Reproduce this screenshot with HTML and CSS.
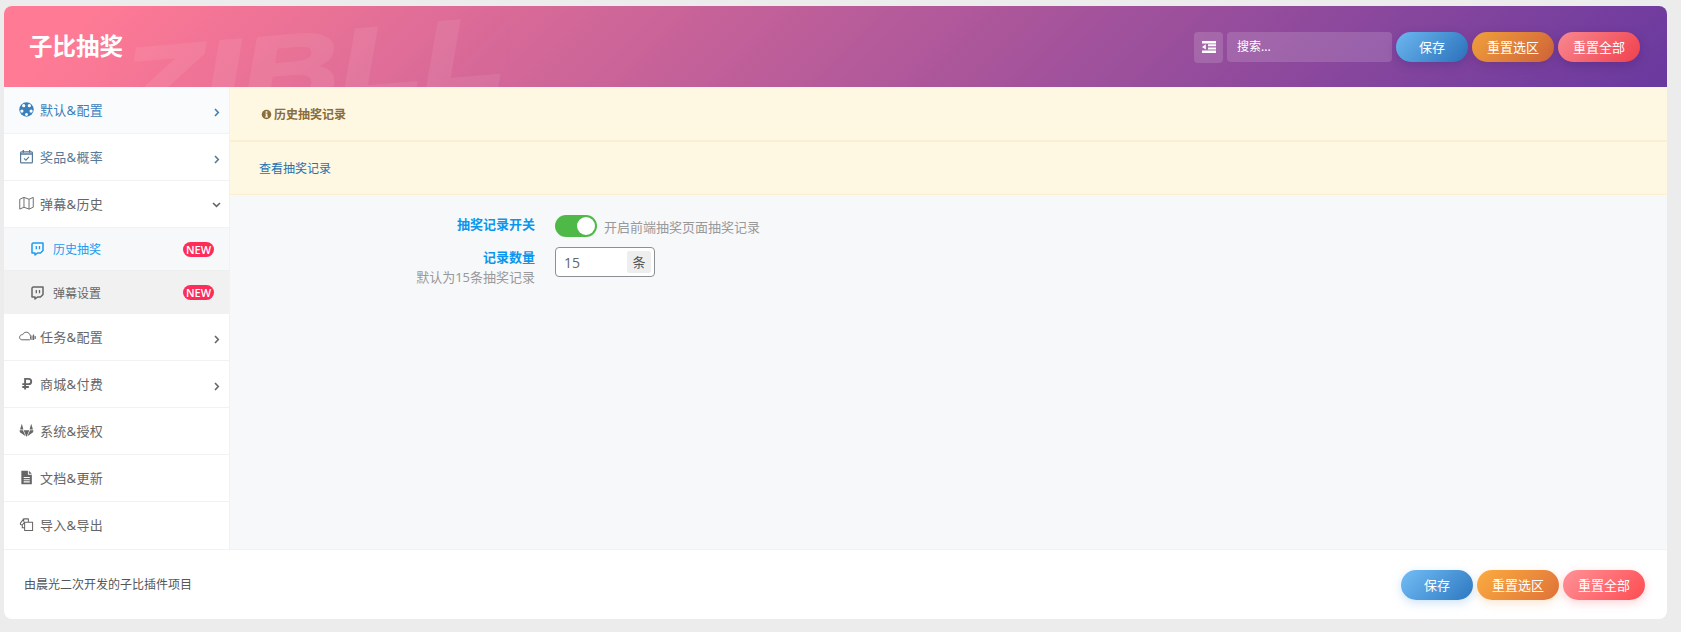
FILE: index.html
```html
<!DOCTYPE html>
<html lang="zh-CN">
<head>
<meta charset="utf-8">
<title>子比抽奖</title>
<link rel="stylesheet" href="styles.css">
</head>
<body>
<div class="card">
  <header class="top">
    <span class="watermark">ZIBLL</span>
    <h1 class="title">子比抽奖</h1>
    <div class="top-tools">
      <span class="expand">
        <svg width="14" height="12" viewBox="0 0 14 12"><path fill="#fff" d="M0 0h14v2.400H0zM6 3.300h8v2H6zM6 6.400h8v2H6zM0 9.600h14V12H0zM3.800 3.200v5.400L0 6z"/></svg>
      </span>
      <input class="search" type="text" placeholder="搜索...">
      <button class="btn btn-save">保存</button>
      <button class="btn btn-section">重置选区</button>
      <button class="btn btn-all">重置全部</button>
    </div>
  </header>
  <div class="main">
    <nav class="side">
      <a class="item item-active">
        <svg class="ico" viewBox="0 0 16 16"><circle cx="8" cy="8" r="7.700" fill="currentColor"/><g fill="#fff"><circle cx="11" cy="3.900" r="1.700"/><circle cx="5" cy="3.900" r="1.700"/><circle cx="12.900" cy="9.700" r="1.700"/><circle cx="3.100" cy="9.700" r="1.700"/><circle cx="8" cy="13.300" r="1.500"/></g></svg>
        <span class="label">默认&amp;配置</span>
        <svg class="chev" viewBox="0 0 6 9"><path d="M1 1l3.300 3.500L1 8" fill="none" stroke="currentColor" stroke-width="1.600"/></svg>
      </a>
      <a class="item item-slate">
        <svg class="ico" viewBox="0 0 16 16"><rect x="1.700" y="3" width="12.600" height="11.800" rx="1" fill="none" stroke="currentColor" stroke-width="1.300"/><path d="M1.700 5.400h12.600" stroke="currentColor" stroke-width="1.500"/><path d="M4.600 1v3M11.400 1v3" stroke="currentColor" stroke-width="1.500"/><path d="M5.300 10l2 1.900 3.400-3.500" fill="none" stroke="currentColor" stroke-width="1.100"/></svg>
        <span class="label">奖品&amp;概率</span>
        <svg class="chev" viewBox="0 0 6 9"><path d="M1 1l3.300 3.500L1 8" fill="none" stroke="currentColor" stroke-width="1.600"/></svg>
      </a>
      <a class="item">
        <svg class="ico ico-wide" viewBox="0 0 16 14"><path d="M.8 3L5.300 1l5.400 2 4.500-2v10.500l-4.500 2-5.400-2-4.500 2zM5.300 1v10.500M10.700 3v10.500" fill="none" stroke="currentColor" stroke-width="1"/></svg>
        <span class="label">弹幕&amp;历史</span>
        <svg class="chev chev-down" viewBox="0 0 9 6"><path d="M1 1l3.500 3.300L8 1" fill="none" stroke="currentColor" stroke-width="1.600"/></svg>
      </a>
      <a class="sub sub-active">
        <svg class="twitch" viewBox="0 0 13 14"><path d="M2 1h10v7.500L9.500 11H6.500L4 13v-2H1V2z" fill="none" stroke="currentColor" stroke-width="1.500" stroke-linejoin="round"/><path d="M5.300 4v3.200M8.500 4v3.200" stroke="currentColor" stroke-width="1.300"/></svg>
        <span class="label">历史抽奖</span>
        <span class="badge">NEW</span>
      </a>
      <a class="sub sub-plain">
        <svg class="twitch" viewBox="0 0 13 14"><path d="M2 1h10v7.500L9.500 11H6.500L4 13v-2H1V2z" fill="none" stroke="currentColor" stroke-width="1.500" stroke-linejoin="round"/><path d="M5.300 4v3.200M8.500 4v3.200" stroke="currentColor" stroke-width="1.300"/></svg>
        <span class="label">弹幕设置</span>
        <span class="badge">NEW</span>
      </a>
      <a class="item">
        <svg class="ico ico-cloud" viewBox="0 0 17 10"><path d="M2.800 8.800H10.500c.6 0 1-.4 1-1V5.500C11.300 3 9.500 1.200 7.300 1.200c-1.600 0-3 1-3.600 2.400C2 3.500.6 4.700.6 6.300c0 1.400 1 2.500 2.200 2.500z" fill="none" stroke="currentColor" stroke-width="1"/><path d="M13 4.500v4.500M14.600 3.500v5.500M16.200 5v3" stroke="currentColor" stroke-width="1.100"/></svg>
        <span class="label">任务&amp;配置</span>
        <svg class="chev" viewBox="0 0 6 9"><path d="M1 1l3.300 3.500L1 8" fill="none" stroke="currentColor" stroke-width="1.600"/></svg>
      </a>
      <a class="item">
        <svg class="ico" viewBox="0 0 16 16"><path d="M6.500 14.500V3h3.700a2.800 2.800 0 010 5.700H3.500M3.500 11.700h7" fill="none" stroke="currentColor" stroke-width="2"/></svg>
        <span class="label">商城&amp;付费</span>
        <svg class="chev" viewBox="0 0 6 9"><path d="M1 1l3.300 3.500L1 8" fill="none" stroke="currentColor" stroke-width="1.600"/></svg>
      </a>
      <a class="item">
        <svg class="ico" viewBox="0 0 16 16"><path fill="currentColor" d="M3 .8L4.700 7H1.100zM13 .8L14.900 7h-3.600zM8 15L5 7.600h6zM4.200 7.800L7 14.200 1 9.900.6 7.800zM11.800 7.800L9 14.200l6-4.300.4-2.100z"/></svg>
        <span class="label">系统&amp;授权</span>
      </a>
      <a class="item">
        <svg class="ico" viewBox="0 0 16 16"><path fill="currentColor" fill-rule="evenodd" d="M2.500.8H9.500V5h4.200v10.200H2.500zM5 7.500v1.100h6.500V7.500zM5 9.800v1.100h6.500V9.800zM5 12.100v1.100h6.500v-1.100zM10.500.8l3.200 3.200h-3.200z"/></svg>
        <span class="label">文档&amp;更新</span>
      </a>
      <a class="item item-last">
        <svg class="ico" viewBox="0 0 16 16"><path d="M6 5.500h8.500v9H6zM6 5.500L3.500 8.500v3H6M3.500 8.500L1.500 8V6.500L5 2h5v3.500M5 2v3" fill="none" stroke="currentColor" stroke-width="1.100" stroke-linejoin="round"/></svg>
        <span class="label">导入&amp;导出</span>
      </a>
    </nav>
    <section class="content">
      <div class="notice notice-head">
        <svg class="info" viewBox="0 0 12 12"><circle cx="6" cy="6" r="5.200" fill="currentColor"/><path d="M5 2.500h2v1.600H5zM4.800 5H7v3.200h.7v1.100H4.500V8.200h.7V6.100h-.4z" fill="#fef7e2"/></svg>
        <span>历史抽奖记录</span>
      </div>
      <div class="notice notice-link"><a class="view-link">查看抽奖记录</a></div>
      <div class="form">
        <div class="row row-switch">
          <div class="field-title"><b>抽奖记录开关</b></div>
          <div class="field-body">
            <span class="switch"><span class="knob"></span></span>
            <span class="hint">开启前端抽奖页面抽奖记录</span>
          </div>
        </div>
        <div class="row row-number">
          <div class="field-title"><b>记录数量</b><small>默认为15条抽奖记录</small></div>
          <div class="field-body">
            <span class="num-box"><input class="num" type="text" value="15"><span class="unit">条</span></span>
          </div>
        </div>
      </div>
    </section>
  </div>
  <footer class="foot">
    <span class="foot-text">由晨光二次开发的子比插件项目</span>
    <div class="foot-tools">
      <button class="btn btn-save light">保存</button>
      <button class="btn btn-section light">重置选区</button>
      <button class="btn btn-all light">重置全部</button>
    </div>
  </footer>
</div>
</body>
</html>
```

FILE: styles.css
```css
* { box-sizing: border-box; }
html, body { height: 100%; }
body {
  margin: 0;
  padding: 6px 14px 13px 4px;
  background: #ececec;
  font-family: "Noto Sans", "Noto Sans CJK SC", "Liberation Sans", sans-serif;
  font-size: 13px;
  color: #666;
  overflow: hidden;
}
.card {
  height: 613px;
  display: flex;
  flex-direction: column;
  background: #fff;
  border-radius: 8px;
  overflow: hidden;
}
.top {
  position: relative;
  flex: 0 0 81px;
  display: flex;
  align-items: center;
  justify-content: space-between;
  padding: 0 27px 0 25px;
  overflow: hidden;
  background: linear-gradient(135deg, #ff7b95 5%, #69399f 100%);
}
.watermark {
  position: absolute;
  left: 121px;
  top: 28px;
  font: italic 700 100px/1 "Liberation Sans", sans-serif;
  color: #fff;
  opacity: 0.07;
  -webkit-text-stroke: 2.5px #fff;
  transform: rotate(-5deg) scaleX(1.36);
  transform-origin: left bottom;
  white-space: nowrap;
}
.title {
  position: relative;
  margin: 0 0 2px;
  font-size: 23.5px;
  line-height: 32px;
  font-weight: 700;
  color: #fff;
}
.top-tools {
  position: relative;
  display: flex;
  align-items: flex-start;
  gap: 4px;
  margin-top: 1px;
}
.expand {
  width: 29px;
  height: 31px;
  display: flex;
  align-items: center;
  justify-content: center;
  border-radius: 4px;
  background: rgba(255, 255, 255, 0.15);
}
.search {
  width: 165px;
  height: 30px;
  padding: 0 10px;
  border: 0;
  border-radius: 4px;
  outline: 0;
  background: rgba(255, 255, 255, 0.15);
  color: #fff;
  font: 12px "Noto Sans", "Noto Sans CJK SC", sans-serif;
}
.search::placeholder { color: #fff; opacity: 1; }
.btn {
  height: 30px;
  width: 82px;
  padding: 0;
  border: 0;
  border-radius: 15px;
  color: #fff;
  font: 13px "Noto Sans", "Noto Sans CJK SC", sans-serif;
}
.btn-save {
  width: 72px;
  background: linear-gradient(135deg, #6cb8f0, #2a70ba);
  box-shadow: 0 3px 10px rgba(50, 40, 120, 0.3);
}
.btn-section {
  background: linear-gradient(135deg, #f0a03c, #cf6238);
  box-shadow: 0 3px 10px rgba(90, 40, 90, 0.3);
}
.btn-all {
  background: linear-gradient(135deg, #f88890, #f0404c);
  box-shadow: 0 3px 10px rgba(70, 30, 110, 0.35);
}
.main {
  flex: 1;
  display: flex;
  min-height: 0;
}
.side {
  flex: 0 0 225px;
  display: flex;
  flex-direction: column;
  background: #fff;
}
.item {
  height: 47px;
  flex: none;
  display: flex;
  align-items: center;
  padding: 0 9px 2px 15px;
  border-bottom: 1px solid #f2f2f2;
  color: #666;
}
.item-last { flex: 1; border-bottom: 0; }
.item-active { background: #f9fbfd; color: #3a80bc; }
.item-slate { color: #577a98; }
.label { white-space: nowrap; }
.item .label { margin-left: 6px; letter-spacing: 0.3px; }
.ico { width: 15px; height: 15px; flex: none; }
.ico-wide { width: 15px; height: 14px; }
.ico-cloud { width: 17px; height: 10px; margin-right: -2px; }
.chev { width: 6px; height: 9px; margin: 6px 0 0 auto; flex: none; }
.chev-down { width: 9px; height: 6px; margin-right: -1px; margin-top: 4px; }
.sub {
  height: 43px;
  flex: none;
  display: flex;
  align-items: center;
  padding: 0 15px 0 27px;
  border-bottom: 1px solid #eee;
  font-size: 12px;
}
.sub .label { margin-left: 9px; }
.sub-active { background: #f7f8fa; color: #1c9bf0; }
.sub-plain { background: #f1f1f1; color: #666; border-bottom: 0; }
.twitch { width: 13px; height: 14px; flex: none; }
.badge {
  margin-left: auto;
  width: 31px;
  height: 15px;
  border-radius: 8px;
  background: #fc2d5a;
  color: #fff;
  font: 600 11px/15px "Open Sans", sans-serif;
  text-align: center;
}
.content {
  flex: 1;
  min-width: 0;
  background: #f7f8fa;
  border-left: 1px solid #f2f2f2;
}
.notice {
  display: flex;
  align-items: center;
  background: #fef7e2;
  border-bottom: 1px solid #faefd0;
  font-size: 12px;
}
.notice-head {
  height: 55px;
  padding: 1px 0 0 31px;
  border-bottom-width: 2px;
  color: #8a6d3b;
  font-weight: 700;
}
.info { width: 11px; height: 11px; margin-right: 2px; flex: none; }
.notice-link {
  height: 53px;
  padding: 0 0 0 29px;
}
.view-link { color: #2271b1; }
.form { padding-top: 20px; }
.row { display: flex; }
.row-switch { height: 32px; }
.field-title {
  width: 305px;
  text-align: right;
  line-height: 18px;
}
.field-title b { display: block; color: #0b96ee; font-weight: 700; }
.field-title small { display: block; margin-top: 2px; font-size: 13px; color: #999; }
.field-body {
  display: flex;
  align-items: flex-start;
  margin-left: 20px;
}
.switch {
  position: relative;
  width: 42px;
  height: 22px;
  border-radius: 11px;
  background: #4fb947;
}
.knob {
  position: absolute;
  top: 2px;
  right: 2px;
  width: 18px;
  height: 18px;
  border-radius: 50%;
  background: #fff;
}
.hint { margin: 3px 0 0 7px; color: #999; line-height: 18px; }
.row-number .field-title { padding-top: 1px; }
.num-box {
  width: 100px;
  height: 30px;
  display: flex;
  align-items: center;
  justify-content: space-between;
  padding: 0 3px 0 8px;
  border: 1px solid #8c8f94;
  border-radius: 4px;
  background: #fff;
}
.num {
  width: 60px;
  padding: 0;
  border: 0;
  outline: 0;
  background: transparent;
  color: #666;
  font: 14px "Open Sans", sans-serif;
}
.unit {
  width: 24px;
  height: 22px;
  border-radius: 2px;
  background: #eee;
  color: #555;
  font-size: 13px;
  line-height: 22px;
  text-align: center;
}
.foot {
  flex: 0 0 70px;
  display: flex;
  align-items: center;
  justify-content: space-between;
  padding: 0 22px 0 20px;
  border-top: 1px solid #f2f2f2;
}
.foot-text { margin-bottom: 2px; font-size: 12px; color: #555; }
.foot-tools { display: flex; gap: 4px; }
.light.btn-save { background: linear-gradient(135deg, #73bdf6, #2d78c0); box-shadow: 0 3px 10px rgba(90, 160, 235, 0.3); }
.light.btn-section { background: linear-gradient(135deg, #fbac40, #df7238); box-shadow: 0 3px 10px rgba(240, 150, 60, 0.25); }
.light.btn-all { background: linear-gradient(135deg, #ff9297, #fd4c52); box-shadow: 0 3px 10px rgba(250, 80, 90, 0.25); }
```
